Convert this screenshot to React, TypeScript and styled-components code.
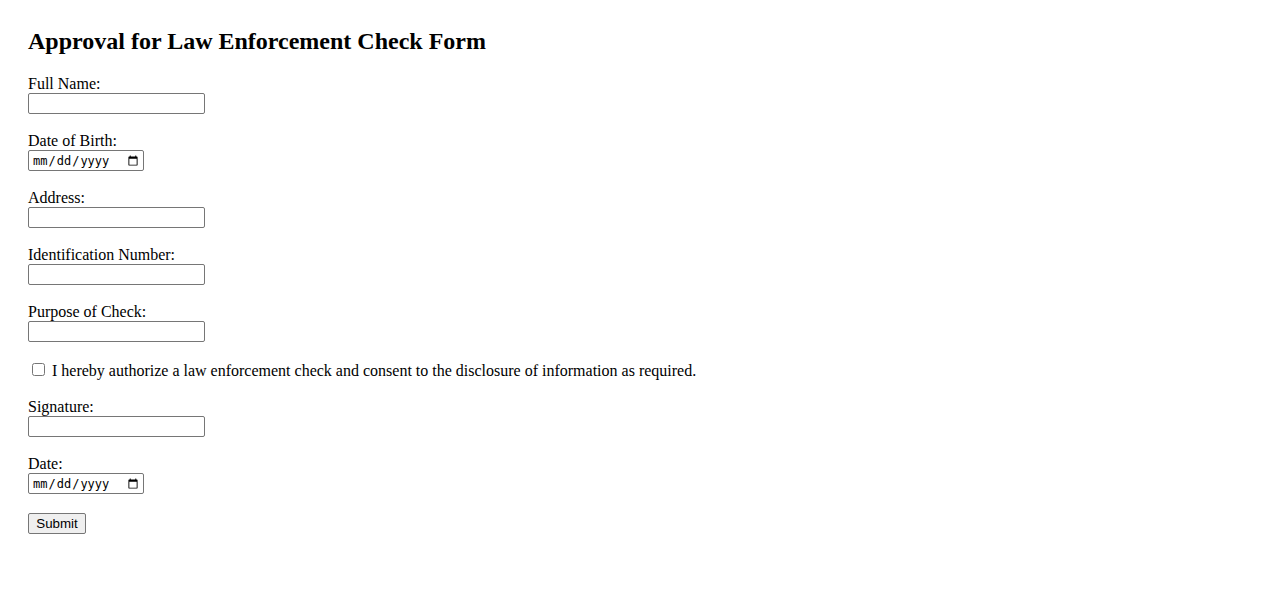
import React, { useState } from 'react';
import styled, { createGlobalStyle } from 'styled-components';

const GlobalStyle = createGlobalStyle`
    body {
        margin: 8px;
        padding: 20px;
        background: #fff;
        color: #000;
        font-family: "Liberation Serif", "Times New Roman", serif;
        font-size: 16px;
    }
`;

const Title = styled.h2`
    font-size: 24px;
    font-weight: bold;
    margin: 0 0 20px 0;
`;

const StyledForm = styled.form`
    display: flex;
    flex-direction: column;
    align-items: flex-start;
`;

const Field = styled.div`
    display: flex;
    flex-direction: column;
    align-items: flex-start;
    margin-bottom: 18px;
`;

const Label = styled.label`
    display: block;
    height: 18px;
    line-height: 18px;
`;

const TextInput = styled.input`
    box-sizing: border-box;
    width: 177px;
    height: 21px;
    margin: 0;
    padding: 1px 2px;
    border: 1px solid #767676;
    border-radius: 2px;
    font-family: Arial, "Liberation Sans", sans-serif;
    font-size: 13.33px;
`;

const DateInput = styled(TextInput)`
    width: 116px;
    padding: 1px 2px 1px 3px;
    font-family: "DejaVu Sans Mono", "Liberation Mono", monospace;
    font-size: 12px;
`;

const ConsentRow = styled.div`
    display: flex;
    align-items: flex-start;
    height: 20px;
    margin-bottom: 18px;
    line-height: 18px;
`;

const ConsentText = styled.label`
    margin-top: 2px;
`;

const Checkbox = styled.input`
    width: 13px;
    height: 13px;
    margin: 3px 7px 3px 4px;
`;

const SubmitButton = styled.button`
    box-sizing: border-box;
    height: 21px;
    width: 58px;
    margin-top: 1px;
    padding: 1px 6px;
    border: 1px solid #767676;
    border-radius: 2px;
    background: #efefef;
    font-family: Arial, "Liberation Sans", sans-serif;
    font-size: 13.33px;
    color: #000;
`;

const fields: { id: string; label: string; type: 'text' | 'date' }[] = [
    { id: 'fullName', label: 'Full Name:', type: 'text' },
    { id: 'dob', label: 'Date of Birth:', type: 'date' },
    { id: 'address', label: 'Address:', type: 'text' },
    { id: 'idNumber', label: 'Identification Number:', type: 'text' },
    { id: 'purpose', label: 'Purpose of Check:', type: 'text' },
];

const App = () => {
    const [agreed, setAgreed] = useState<boolean>(false);
    return (
        <>
            <GlobalStyle />
            <Title>Approval for Law Enforcement Check Form</Title>
            <StyledForm onSubmit={(e) => e.preventDefault()}>
                {fields.map((f) => (
                    <Field key={f.id}>
                        <Label htmlFor={f.id}>{f.label}</Label>
                        {f.type === 'date'
                            ? <DateInput id={f.id} name={f.id} type="date" />
                            : <TextInput id={f.id} name={f.id} type="text" />}
                    </Field>
                ))}
                <ConsentRow>
                    <Checkbox id="consent" type="checkbox" checked={agreed} onChange={(e) => setAgreed(e.target.checked)} />
                    <ConsentText htmlFor="consent">I hereby authorize a law enforcement check and consent to the disclosure of information as required.</ConsentText>
                </ConsentRow>
                <Field>
                    <Label htmlFor="signature">Signature:</Label>
                    <TextInput id="signature" name="signature" type="text" />
                </Field>
                <Field>
                    <Label htmlFor="date">Date:</Label>
                    <DateInput id="date" name="date" type="date" />
                </Field>
                <SubmitButton type="submit">Submit</SubmitButton>
            </StyledForm>
        </>
    );
};

export default App;
